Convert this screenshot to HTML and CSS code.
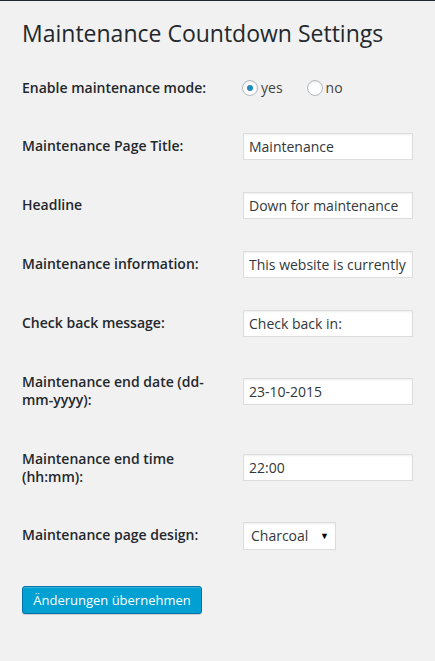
FILE: index.html
```html
<!DOCTYPE html>
<html>
<head>
<meta charset="utf-8">
<link rel="stylesheet" href="styles.css">
</head>
<body>
<div class="topbar"></div>
<div class="wrap">
  <h1 class="page-title">Maintenance Countdown Settings</h1>
  <form>
    <table class="form-table">
      <tr>
        <th>Enable maintenance mode:</th>
        <td class="radios">
          <div class="radio-group">
            <label class="radio"><span class="dot checked"></span><span>yes</span></label>
            <label class="radio"><span class="dot"></span><span>no</span></label>
          </div>
        </td>
      </tr>
      <tr>
        <th>Maintenance Page Title:</th>
        <td><input class="text" type="text" value="Maintenance"></td>
      </tr>
      <tr>
        <th>Headline</th>
        <td><input class="text" type="text" value="Down for maintenance"></td>
      </tr>
      <tr>
        <th>Maintenance information:</th>
        <td><input class="text" type="text" value="This website is currently undergoing maintenance"></td>
      </tr>
      <tr>
        <th>Check back message:</th>
        <td><input class="text" type="text" value="Check back in:"></td>
      </tr>
      <tr>
        <th>Maintenance end date (dd-mm-yyyy):</th>
        <td><input class="text" type="text" value="23-10-2015"></td>
      </tr>
      <tr>
        <th>Maintenance end time (hh:mm):</th>
        <td><input class="text" type="text" value="22:00"></td>
      </tr>
      <tr>
        <th>Maintenance page design:</th>
        <td><span class="select"><span class="select-value">Charcoal</span><span class="select-arrow">▼</span></span></td>
      </tr>
    </table>
    <p class="submit"><button type="button" class="button-primary">Änderungen übernehmen</button></p>
  </form>
</div>
</body>
</html>
```
FILE: styles.css
```css
html, body {
  margin: 0;
  padding: 0;
  background: #f1f1f1;
}
body {
  font-family: "Open Sans", "Liberation Sans", sans-serif;
  font-size: 13px;
  color: #444;
  height: 661px;
  overflow: hidden;
}
.topbar {
  height: 1px;
  background: #23282d;
}
.wrap {
  padding: 0 0 0 22px;
}
.page-title {
  margin: 0;
  padding: 18px 0 0;
  font-size: 23px;
  font-weight: 400;
  line-height: 29px;
  color: #23282d;
  height: 40px;
}
.form-table {
  border-collapse: collapse;
  border-spacing: 0;
  margin: 0;
}
.form-table th {
  width: 200px;
  padding: 20px 10px 20px 0;
  text-align: left;
  vertical-align: top;
  font-size: 14px;
  font-weight: 600;
  line-height: 1.3;
  color: #23282d;
}
.form-table td {
  padding: 15px 10px;
  vertical-align: middle;
  line-height: 1.3;
  font-size: 14px;
}
.form-table td.radios {
  padding-top: 20px;
  vertical-align: top;
}
.radio-group {
  display: flex;
  align-items: center;
  gap: 24px;
}
.radio {
  display: flex;
  align-items: center;
  color: #444;
  font-size: 14px;
  line-height: 18px;
}
.dot {
  box-sizing: border-box;
  width: 16px;
  height: 16px;
  border: 1px solid #b4b9be;
  border-radius: 50%;
  background: #fff;
  box-shadow: inset 0 1px 2px rgba(0,0,0,.1);
  margin: 0 3px 0 0;
  display: flex;
  align-items: center;
  justify-content: center;
}
.dot.checked::after {
  content: "";
  width: 6px;
  height: 6px;
  border-radius: 50%;
  background: #1e8cbe;
}
.text {
  box-sizing: border-box;
  width: 170px;
  height: 27px;
  margin: 1px;
  padding: 2px 5px;
  border: 1px solid #ddd;
  background: #fff;
  box-shadow: inset 0 1px 2px rgba(0,0,0,.07);
  font-family: "Open Sans", "Liberation Sans", sans-serif;
  font-size: 14px;
  color: #32373c;
  outline: none;
  display: block;
}
.select {
  box-sizing: border-box;
  width: 93px;
  height: 28px;
  margin: 1px;
  padding: 0 6px 0 7px;
  border: 1px solid #ddd;
  background: #fff;
  box-shadow: inset 0 1px 2px rgba(0,0,0,.07);
  display: flex;
  align-items: center;
  justify-content: space-between;
  font-size: 14px;
  color: #32373c;
}
.select-arrow {
  font-size: 9px;
  color: #000;
  line-height: 1;
}
.submit {
  margin: 20px 0 0;
  padding: 0;
}
.button-primary {
  box-sizing: border-box;
  height: 28px;
  width: 180px;
  padding: 0 10px 1px;
  border: 1px solid #0073aa;
  border-radius: 3px;
  background: #00a0d2;
  color: #fff;
  font-family: "Open Sans", "Liberation Sans", sans-serif;
  font-size: 13px;
  line-height: 26px;
  box-shadow: inset 0 1px 0 rgba(120,200,230,.5), 0 1px 0 rgba(0,0,0,.15);
  cursor: pointer;
  white-space: nowrap;
}
```
